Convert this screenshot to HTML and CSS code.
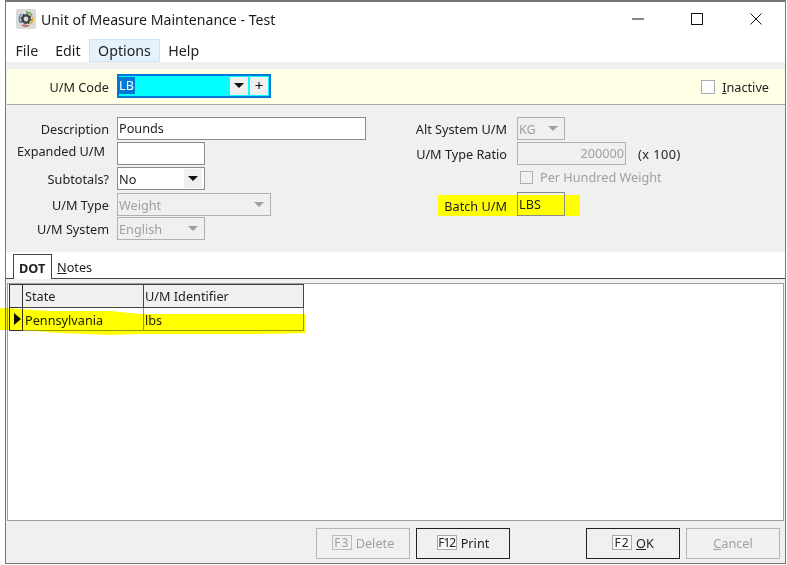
FILE: index.html
```html
<!DOCTYPE html>
<html lang="en">
<head>
<meta charset="utf-8">
<title>Unit of Measure Maintenance - Test</title>
<link rel="stylesheet" href="styles.css">
</head>
<body>
<div class="window">
  <header class="titlebar">
    <svg class="app-icon" width="20" height="20" viewBox="0 0 20 20">
      <rect x="0" y="0" width="20" height="20" rx="2" fill="#d9d9d9"/>
      <path d="M10 3a7 7 0 0 1 6 3.5" fill="none" stroke="#6aa84f" stroke-width="1.6"/>
      <path d="M16.5 8a7 7 0 0 1-2 7" fill="none" stroke="#e0b030" stroke-width="1.6"/>
      <path d="M13 16.4a7 7 0 0 1-7-.6" fill="none" stroke="#d0574a" stroke-width="1.6"/>
      <path d="M4.5 14a7 7 0 0 1 1-9" fill="none" stroke="#5b8fc7" stroke-width="1.6"/>
      <circle cx="10" cy="10" r="3.6" fill="none" stroke="#444" stroke-width="2.4"/>
      <circle cx="10" cy="10" r="5" fill="none" stroke="#444" stroke-width="1.4" stroke-dasharray="1.6 2.3"/>
    </svg>
    <span class="title">Unit of Measure Maintenance - Test</span>
    <div class="win-controls">
      <svg class="win-btn" width="14" height="14" viewBox="0 0 14 14"><path d="M1 7h12" stroke="#111" fill="none"/></svg>
      <svg class="win-btn" width="14" height="14" viewBox="0 0 14 14"><rect x="1.5" y="1.5" width="11" height="11" stroke="#111" fill="none"/></svg>
      <svg class="win-btn" width="14" height="14" viewBox="0 0 14 14"><path d="M1.5 1.5l11 11M12.5 1.5l-11 11" stroke="#111" fill="none"/></svg>
    </div>
  </header>

  <nav class="menubar">
    <span class="menu-item">File</span>
    <span class="menu-item">Edit</span>
    <span class="menu-item active">Options</span>
    <span class="menu-item">Help</span>
  </nav>

  <div class="stripe"></div>

  <section class="code-band">
    <label class="band-label">U/M Code</label>
    <div class="code-combo">
      <span class="code-value"><span class="selected">LB</span></span>
      <span class="combo-btn"><i class="arrow"></i></span>
      <span class="combo-btn plus">+</span>
    </div>
    <div class="inactive">
      <span class="check"></span>
      <span><u>I</u>nactive</span>
    </div>
  </section>

  <section class="form">
    <div class="col col-left">
      <div class="row row-desc"><label>Description</label><div class="field w249">Pounds</div></div>
      <div class="row row-exp"><label class="lbl-exp">Expanded U/M</label><div class="field w88"></div></div>
      <div class="row row-sub"><label>Subtotals?</label><div class="field w88 select"><span class="val">No</span><span class="sel-btn"><i class="arrow"></i></span></div></div>
      <div class="row row-type"><label>U/M Type</label><div class="field w153 select disabled"><span class="val">Weight</span><span class="sel-btn"><i class="arrow"></i></span></div></div>
      <div class="row row-sys"><label>U/M System</label><div class="field w88 select disabled"><span class="val">English</span><span class="sel-btn"><i class="arrow"></i></span></div></div>
    </div>
    <div class="col col-right">
      <div class="row row-desc"><label>Alt System U/M</label><div class="field w48 select disabled"><span class="val">KG</span><span class="sel-btn"><i class="arrow"></i></span></div></div>
      <div class="row row-ratio"><label>U/M Type Ratio</label><div class="field w109 disabled num">200000</div><span class="suffix">(x 100)</span></div>
      <div class="row row-per"><span class="check small"></span><span class="per-label">Per Hundred Weight</span></div>
      <div class="row row-batch"><label>Batch U/M</label><div class="field w48 clear">LBS</div></div>
    </div>
  </section>

  <div class="tabs">
    <span class="tab current">DOT</span>
    <span class="tab"><u>N</u>otes</span>
  </div>

  <section class="panel">
    <table class="grid">
      <thead>
        <tr><th class="c0"></th><th class="c1">State</th><th class="c2">U/M Identifier</th></tr>
      </thead>
      <tbody>
        <tr><td class="c0"><i class="row-arrow"></i></td><td class="c1">Pennsylvania</td><td class="c2">lbs</td></tr>
      </tbody>
    </table>
    <svg class="marker" width="306" height="30" viewBox="0 0 306 30">
      <path d="M0 2L20 3L50 5L110 5L140 8L305 8L306 27L260 28L140 28L110 29L60 27L22 24L0 24Z" fill="#ffff00"/>
    </svg>
  </section>

  <footer class="footer">
    <button class="btn off"><span class="key wide">F3</span> Delete</button>
    <button class="btn"><span class="key tight">F12</span> Print</button>
    <span class="gap"></span>
    <button class="btn"><span class="key wide">F2</span> <span><u>O</u>K</span></button>
    <button class="btn off"><span><u>C</u>ancel</span></button>
  </footer>
</div>
</body>
</html>
```

FILE: styles.css
```css
* { box-sizing: border-box; }
html, body { margin: 0; padding: 0; background: #fff; }
body { font: 12.7px "Noto Sans", "Open Sans", sans-serif; color: #222; width: 787px; height: 565px; overflow: hidden; }

.window { margin-left: 5px; width: 781px; height: 564px; border: 1px solid #777; border-top-width: 2px; display: flex; flex-direction: column; background: #f0f0f0; }

.titlebar { height: 37px; background: #fff; display: flex; align-items: center; padding: 0 0 3px 10px; flex: none; }
.app-icon { flex: none; }
.title { margin-left: 5px; font-size: 14.1px; color: #1a1a1a; }
.win-controls { margin-left: auto; display: flex; gap: 45px; margin-right: 22px; }
.win-btn { display: block; }

.menubar { height: 23px; background: #fff; display: flex; flex: none; padding-left: 1px; }
.menu-item { padding: 0 7.5px; font-size: 14.2px; line-height: 23px; color: #222; border: 1px solid transparent; display: flex; align-items: center; }
.menu-item.active { background: #e5f1fb; border-color: #cce4f7; padding: 0 8px; }

.stripe { height: 7px; flex: none; background: #f0f0f0; }

.code-band { height: 36px; flex: none; margin-left: 1px; background: #ffffe6; border-bottom: 1px solid #a6a6a6; display: flex; align-items: center; padding: 0 16px 0 0; }
.band-label { width: 102px; text-align: right; padding-top: 1px; }
.code-combo { margin-left: 8px; width: 154px; height: 24px; background: #00ffff; border: 2px solid #0078d7; display: flex; align-items: center; padding-right: 1px; gap: 2px; position: relative; top: -1px; }
.code-value { flex: 1; line-height: 17px; }
.selected { background: #0078d7; color: #fff; display: inline-block; padding-right: 1px; }
.combo-btn { width: 18px; height: 18px; background: #f0f0f0; display: flex; align-items: center; justify-content: center; color: #111; font-size: 15px; line-height: 1; }
.arrow { display: block; width: 0; height: 0; border: 5px solid transparent; border-top: 5px solid #111; border-bottom: 0; }
.inactive { margin-left: auto; display: flex; align-items: center; gap: 7px; }
.check { width: 14px; height: 14px; background: #fff; border: 1px solid #aaa; display: block; flex: none; }

.form { height: 147px; flex: none; display: flex; padding-top: 12px; background: #f0f0f0; }
.col { position: relative; }
.col-left { width: 401px; }
.col-right { flex: 1; }
.row { display: flex; align-items: center; }
.col label { text-align: right; display: block; flex: none; padding-top: 1px; }
.col-left label { width: 103px; margin-right: 8px; }
.col-right label { width: 100px; margin-right: 10px; }
.lbl-exp { position: relative; top: -3px; left: -4px; }

.field { height: 23px; background: #fff; border: 1px solid #8c8c8c; padding: 0 1px; line-height: 19px; flex: none; display: flex; align-items: center; color: #222; }
.select { justify-content: space-between; padding-right: 2px; }
.val { padding-top: 1px; }
.sel-btn { width: 18px; height: 19px; background: #f0f0f0; display: flex; align-items: center; justify-content: center; }
.disabled { background: #f0f0f0; color: #a0a0a0; border-color: #b0b0b0; }
.disabled .arrow { border-top-color: #a0a0a0; }
.num { justify-content: flex-end; }
.w249 { width: 249px; }
.w153 { width: 154px; }
.w88 { width: 88px; }
.w109 { width: 109px; }
.w48 { width: 48px; }

.row-desc { height: 23px; margin-bottom: 2px; }
.row-exp { height: 22px; margin-bottom: 3px; }
.row-sub { height: 23px; margin-bottom: 3px; }
.row-type { height: 23px; margin-bottom: 1px; }
.row-sys { height: 23px; }
.row-ratio { height: 23px; margin-bottom: 5px; }
.suffix { margin-left: 12px; letter-spacing: .5px; }
.row-per { height: 14px; padding-left: 113px; gap: 7px; margin-bottom: 11px; }
.check.small { width: 13px; height: 13px; background: #f0f0f0; border-color: #b0b0b0; }
.per-label { color: #a0a0a0; }
.row-batch { height: 21px; margin-left: 31px; width: 142px; background: #ffff00; }
.col-right .row-batch label { width: 69px; margin-right: 10px; }
.field.clear { background: transparent; height: 24px; margin-top: -3px; border-color: #8c8c8c; }

.tabs { height: 27px; flex: none; background: #fff; display: flex; align-items: flex-end; padding-left: 7px; gap: 5px; border-bottom: 1px solid #444; }
.tab { height: 24px; line-height: 26px; padding: 0 4px 0 0; }
.tab.current { padding: 0 5px; width: 39px; font-weight: 700; border: 1px solid #444; border-bottom: 0; background: #fff; position: relative; height: 25px; margin-bottom: -1px; line-height: 26px; }

.panel { position: relative; height: 238px; flex: none; margin: 4px 1px 0 1px; background: #fff; border: 1px solid #a0a0a0; padding: 0 0 0 1px; }
.grid { border-collapse: collapse; table-layout: fixed; width: 295px; }
.grid th, .grid td { border: 1px solid #444; font-weight: 400; text-align: left; padding: 0 0 0 2px; height: 23px; line-height: 20px; }
.grid .c2 { padding-left: 1px; }
.grid td.c1, .grid td.c2 { padding-top: 1px; }
.grid th { background: #f0f0f0; }
.grid td { border-color: #9a9a40; }
.grid th.c0, .grid td.c0 { width: 13px; padding: 0; border-color: #333; }
.grid th.c1 { width: 121px; }
.row-arrow { display: block; width: 0; height: 0; margin-left: 4px; border: 6px solid transparent; border-left: 7px solid #111; border-right: 0; }
.marker { position: absolute; left: -8px; top: 22px; mix-blend-mode: multiply; }

.footer { flex: 1; display: flex; align-items: flex-start; padding: 7px 5px 0 0; justify-content: flex-end; gap: 6px; background: #f0f0f0; }
.gap { width: 64px; }
.btn { width: 94px; height: 31px; border: 1px solid #222; background: #f0f0f0; font: 12.7px "Noto Sans", sans-serif; color: #222; display: flex; align-items: center; justify-content: center; gap: 4px; padding: 0 0 2px; }
.btn.off { border-color: #b5b5b5; color: #a0a0a0; }
.key { width: 20px; height: 15px; border: 1px solid #aaa; background: #fafafa; line-height: 13px; font-size: 12px; text-align: center; display: block; }
.key.wide { letter-spacing: 1px; }
.key.tight { letter-spacing: -1px; }
.off .key { background: #f0f0f0; border-color: #bbb; }
```
